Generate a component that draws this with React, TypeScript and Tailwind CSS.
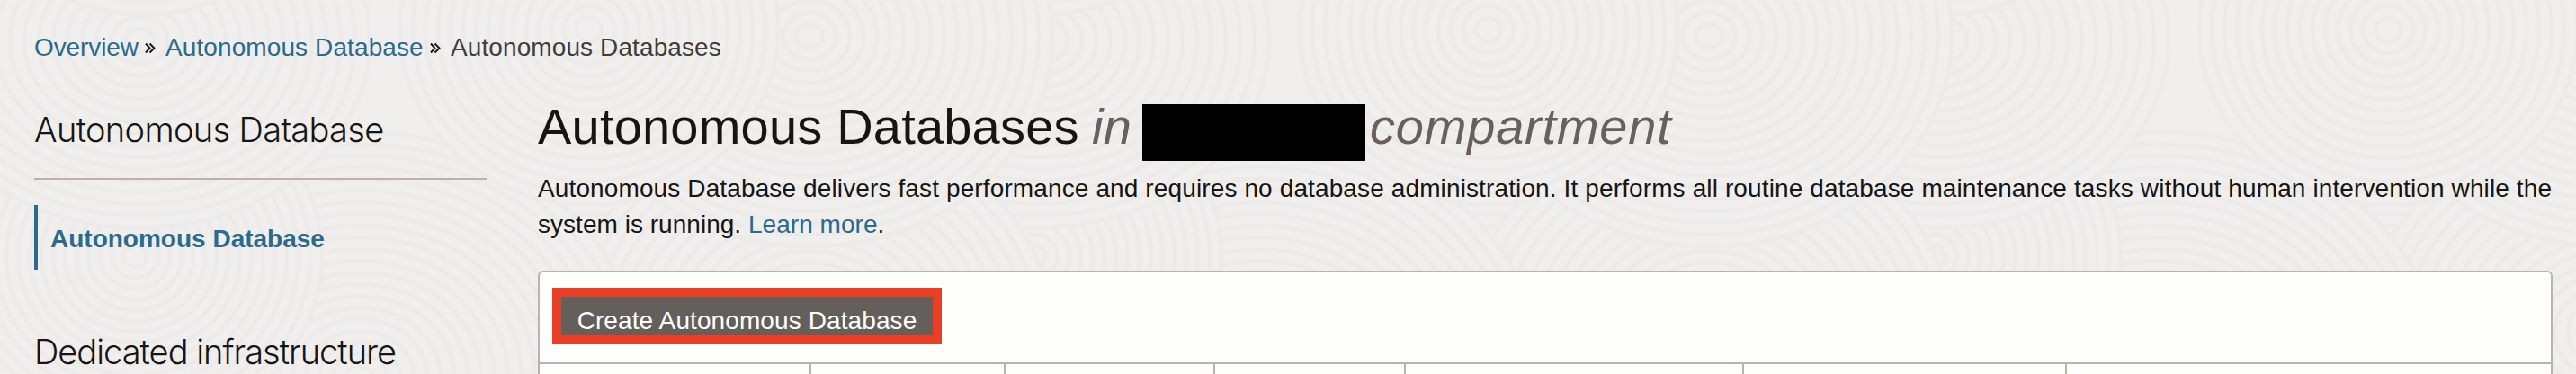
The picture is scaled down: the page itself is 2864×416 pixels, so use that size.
const swirls: { cx: number; cy: number; rx: number; ry: number; n: number }[] = [
  { cx: 650, cy: 420, rx: 15, ry: 13, n: 22 },
  { cx: 900, cy: 370, rx: 15, ry: 13, n: 18 },
  { cx: 400, cy: 420, rx: 15, ry: 13, n: 21 },
  { cx: 150, cy: 285, rx: 13, ry: 12, n: 16 },
  { cx: 900, cy: 40, rx: 15, ry: 13, n: 18 },
  { cx: 655, cy: 33, rx: 14, ry: 13, n: 15 },
  { cx: 155, cy: 45, rx: 16, ry: 13, n: 16 },
  { cx: 160, cy: -180, rx: 15, ry: 14, n: 14 },
];

function Backdrop() {
  return (
    <svg className="absolute inset-0 h-full w-full blur-[0.8px]" aria-hidden="true">
      <defs>
        <g id="swirls">
          {swirls.map((s, k) => (
            <g key={k} fill="#f0efed" stroke="#ebeae8" strokeWidth="4">
              {Array.from({ length: s.n }, (_, i) => (
                <ellipse key={i} cx={s.cx} cy={s.cy} rx={s.rx * (s.n - i)} ry={s.ry * (s.n - i)} />
              ))}
            </g>
          ))}
        </g>
      </defs>
      <use href="#swirls" x="-1000" />
      <use href="#swirls" x="2000" />
      <use href="#swirls" x="1000" />
      <use href="#swirls" />
    </svg>
  );
}

function Chevrons() {
  return (
    <svg className="h-3.5 w-3.5" viewBox="0 0 14 14" fill="none" stroke="#161513" strokeWidth="1.9" aria-hidden="true">
      <path d="M2 2.500 6.500 7.500 2 12.500M6.500 2.500 11.500 7.500 6.500 12.500" />
    </svg>
  );
}

const columns = ["w-[302px]", "w-[216px]", "w-[233px]", "w-[212px]", "w-[376px]", "w-[359px]"];

export default function App() {
  return (
    <div className="relative h-[416px] w-[2864px] overflow-hidden bg-[#f0efed] font-['Liberation_Sans',Arial,sans-serif] text-[28px] text-[#161513]">
      <Backdrop />
      <div className="relative flex flex-col">
        <nav className="mt-[37px] flex h-8 items-center pl-[38px] leading-8 text-[#2a6a8b]">
          <a className="w-[122px] tracking-[-0.1px]">Overview</a>
          <Chevrons />
          <a className="ml-[10px] w-[293px] tracking-[0.1px]">Autonomous Database</a>
          <Chevrons />
          <span className="ml-[10px] tracking-[0.1px] text-[#3f3d3a]">Autonomous Databases</span>
        </nav>
        <div className="flex pl-[38px]">
          <aside className="w-[504px] shrink-0">
            <h2 className="mt-[50px] h-[81px] border-b-2 border-[#b9b3ac] font-['Inter','Liberation_Sans',sans-serif] text-[38px] leading-[50px] font-light tracking-[-0.66px]">
              Autonomous Database
            </h2>
            <div className="mt-7 flex h-[72px] items-center border-l-4 border-[#2a6a8b] pt-[3px] pl-[14px] font-bold text-[#2a6a8b]">
              Autonomous Database
            </div>
            <h2 className="mt-[66px] font-['Inter','Liberation_Sans',sans-serif] text-[38px] leading-[50px] font-light tracking-[-1px]">
              Dedicated infrastructure
            </h2>
          </aside>
          <main className="ml-14 w-[2240px] shrink-0">
            <h1 className="mt-[38px] flex h-[80px] items-center text-[56px] leading-[64px] tracking-[0.2px]">
              <span className="w-[616px] pb-3 whitespace-nowrap">Autonomous Databases</span>
              <em className="w-[56px] pb-3 text-[#67605b]">in</em>
              <span className="h-[63px] w-[248px] bg-black" />
              <em className="ml-[5px] pb-3 tracking-[0.8px] text-[#67605b]">compartment</em>
            </h1>
            <p className="mt-[3px] leading-10 tracking-[0.122px] whitespace-nowrap">
              Autonomous Database delivers fast performance and requires no database administration. It performs all routine database maintenance tasks without human intervention while the
              <br />
              <span className="tracking-[0.03px]">
                system is running. <a className="text-[#2a6a8b] underline decoration-1 underline-offset-[3px]">Learn more</a>.
              </span>
            </p>
            <section className="mt-[31px] h-[160px] rounded-t-[6px] border-2 border-[#b9b3ac] bg-[#fdfdfb]">
              <div className="flex h-[102px] items-start border-b-2 border-[#b9b3ac] pt-[17px] pl-[14px]">
                <button className="h-[63px] w-[433px] border-[10px] border-[#eb3f25] bg-[#645f5a] pt-[6px] tracking-[0.1px] text-white">
                  Create Autonomous Database
                </button>
              </div>
              <div className="flex h-14">
                {columns.map((w) => (
                  <div key={w} className={`${w} border-r-2 border-[#b9b3ac]`} />
                ))}
              </div>
            </section>
          </main>
        </div>
      </div>
    </div>
  );
}
